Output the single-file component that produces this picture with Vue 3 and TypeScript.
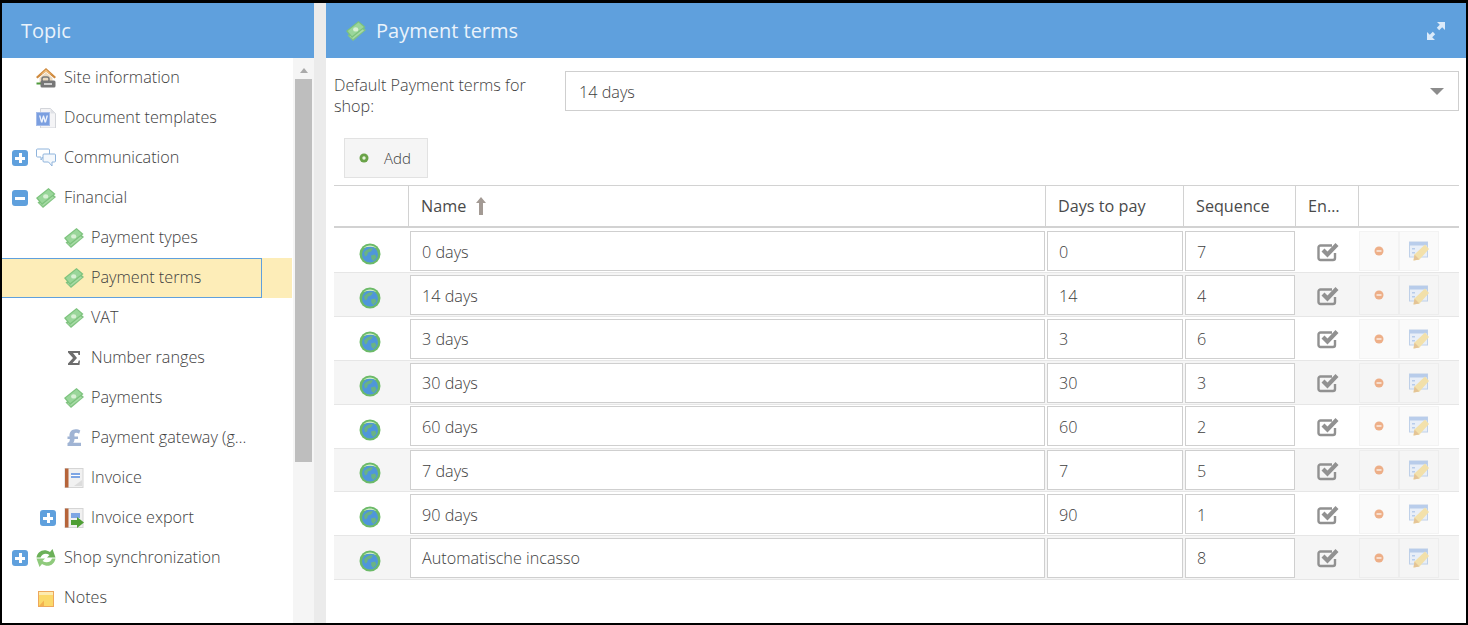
<script setup lang="ts">
interface TreeItem {
  label: string
  icon: string
  level: number
  toggle?: 'plus' | 'minus'
  selected?: boolean
}

interface Term {
  name: string
  days: string
  sequence: string
}

const tree: TreeItem[] = [
  { label: 'Site information', icon: 'house', level: 0 },
  { label: 'Document templates', icon: 'doc', level: 0 },
  { label: 'Communication', icon: 'chat', level: 0, toggle: 'plus' },
  { label: 'Financial', icon: 'money', level: 0, toggle: 'minus' },
  { label: 'Payment types', icon: 'money', level: 1 },
  { label: 'Payment terms', icon: 'money', level: 1, selected: true },
  { label: 'VAT', icon: 'money', level: 1 },
  { label: 'Number ranges', icon: 'sigma', level: 1 },
  { label: 'Payments', icon: 'money', level: 1 },
  { label: 'Payment gateway (g…', icon: 'pound', level: 1 },
  { label: 'Invoice', icon: 'invoice', level: 1 },
  { label: 'Invoice export', icon: 'export', level: 1, toggle: 'plus' },
  { label: 'Shop synchronization', icon: 'sync', level: 0, toggle: 'plus' },
  { label: 'Notes', icon: 'note', level: 0 },
]

const terms: Term[] = [
  { name: '0 days', days: '0', sequence: '7' },
  { name: '14 days', days: '14', sequence: '4' },
  { name: '3 days', days: '3', sequence: '6' },
  { name: '30 days', days: '30', sequence: '3' },
  { name: '60 days', days: '60', sequence: '2' },
  { name: '7 days', days: '7', sequence: '5' },
  { name: '90 days', days: '90', sequence: '1' },
  { name: 'Automatische incasso', days: '', sequence: '8' },
]
</script>

<template>
  <div class="frame">
    <svg class="defs" width="0" height="0">
      <symbol id="money" viewBox="0 0 20 20">
        <path d="M1.500 14.500 15 4.500 20 9 7 20z" fill="#82c482" />
        <path d="M3.500 15.500 15 7l3 2.500L7 18z" fill="#a8dba6" />
        <path d="M0 10 12.500 0 19.500 6 6 17z" fill="#7cc27c" />
        <path d="M1.800 10 12.500 1.600 17.700 6 6 15.300z" fill="#9ad69a" />
        <ellipse cx="9.700" cy="8.400" rx="2.600" ry="2.200" fill="#d8f0d4" />
      </symbol>
      <symbol id="house" viewBox="0 0 20 20">
        <path d="M10 0 0 9l1.500 1.500L10 3.500l8.500 7L20 9z" fill="#cf8a3e" />
        <path d="M10 1.500 4 7l6-3 6 3z" fill="#f0bd7c" />
        <path d="M3.500 10 10 4.500l6.500 5.500v5h-13z" fill="#ead9bf" />
        <rect x="0.500" y="14.500" width="6" height="2" fill="#4f9a3c" />
        <rect x="6" y="9" width="7" height="5" rx="2" fill="none" stroke="#777" stroke-width="1.500" />
        <rect x="4.500" y="12.500" width="15" height="7" rx="1.500" fill="#777" />
        <rect x="8" y="15" width="8" height="2" fill="#d0d0d0" />
      </symbol>
      <symbol id="doc" viewBox="0 0 20 20">
        <path d="M4.500 0.500h10l5 5v14.500h-15z" fill="#f4f4f6" stroke="#d3d5da" />
        <path d="M14.500 0.500v5h5z" fill="#dfe1e6" />
        <rect x="0.500" y="4.500" width="13" height="13" fill="#7b9fe0" stroke="#a6bdea" />
        <path d="M3 7.500h1.500l1 4.500L7 7.500h1l1.500 4.500 1-4.500H12l-2 7H8.500L7.500 10.500l-1 4H5z" fill="#eef3fc" />
      </symbol>
      <symbol id="chat" viewBox="0 0 20 20">
        <path d="M1.500 1h11a1 1 0 0 1 1 1v6a1 1 0 0 1-1 1H7l-2 3V9H1.500a1 1 0 0 1-1-1V2a1 1 0 0 1 1-1z" fill="#fff" stroke="#8fb4dc" />
        <path d="M8 6h10.500a1 1 0 0 1 1 1v6a1 1 0 0 1-1 1H16v4l-3.500-4H8a1 1 0 0 1-1-1V7a1 1 0 0 1 1-1z" fill="#f4f8fc" stroke="#8fb4dc" />
      </symbol>
      <symbol id="sigma" viewBox="0 0 20 20">
        <path d="M4 3h12v4h-1.500l-.5-2H9l4 5-4.500 5H14l.7-2.500H16L15.500 17H4v-1.500L9 10 4 4.500z" fill="#6c6c6c" />
      </symbol>
      <symbol id="pound" viewBox="0 0 20 20">
        <path d="M3.500 18v-3c1.500-.5 2.500-1.800 2.300-4H3.500V8.500h2C5 4 7.800 1.200 11.500 1.200c2 0 3.700.5 4.800 1.300l-1.200 3.300c-1-.7-2-1-3-1-1.300 0-2 1-1.600 3.700H14V11h-3.500c0 1.500-.4 2.800-1.300 3.800h7.800V18z" fill="#a0b4d4" />
      </symbol>
      <symbol id="invoice" viewBox="0 0 20 20">
        <rect x="1" y="0.500" width="18" height="19" fill="#f1f1f1" stroke="#d5d5d5" />
        <rect x="1" y="0.500" width="3.500" height="19" fill="#b5643a" />
        <rect x="7" y="5" width="9" height="5" fill="#7ea6e4" />
        <rect x="7" y="7" width="9" height="1" fill="#fff" />
        <path d="M10 18l8-6v6z" fill="#dcdcdc" />
      </symbol>
      <symbol id="export" viewBox="0 0 20 20">
        <rect x="1" y="0.500" width="18" height="19" fill="#f1f1f1" stroke="#d5d5d5" />
        <rect x="1" y="0.500" width="3.500" height="19" fill="#b5643a" />
        <rect x="7" y="5" width="9" height="5" fill="#7ea6e4" />
        <path d="M7 12h6V9l7 5.500-7 5.500v-3H7z" fill="#4f9f35" />
      </symbol>
      <symbol id="sync" viewBox="0 0 20 20">
        <path d="M0.500 9.500C1.500 3 8 0 14 4l2.500-3 3 8.500h-8.500l2.500-2.500C10 4.500 6 5.500 4.500 9.500z" fill="#6bb058" />
        <path d="M19.500 10.500c-1 6.500-7.500 9.500-13.500 5.500l-2.500 3-3-8.500H9L6.500 13c4 2.500 8 1.500 9.500-2.500z" fill="#8fca7c" />
      </symbol>
      <symbol id="note" viewBox="0 0 20 20">
        <rect x="2.500" y="3.500" width="15" height="15" fill="#fbd96a" stroke="#eda85c" />
        <path d="M3 4h14v3H3z" fill="#fdebb0" />
        <path d="M3 18l5-5.500V18z" fill="#f3b24f" />
      </symbol>
      <symbol id="globe" viewBox="0 0 22 22">
        <circle cx="11" cy="11" r="10.500" fill="#6cba68" />
        <circle cx="11" cy="11.500" r="8" fill="#4f96da" />
        <path d="M5 9.500c2-3 6-5 9-4l-2 3-3 1-1 3-2 1zM12 12.500l4-1 1.500 3-3 3.500-2-2z" fill="#6ab384" />
        <path d="M4.500 5C8 1.500 14 1.500 17.500 5 13 3.200 9 3.200 4.500 5z" fill="#d6f2d0" />
      </symbol>
      <symbol id="edit" viewBox="0 0 20 20">
        <rect x="0.500" y="1" width="18" height="15" fill="#e5edf8" stroke="#b2c8e6" />
        <rect x="0.500" y="1" width="18" height="3.500" fill="#a9c3e8" />
        <rect x="3" y="7" width="3" height="1.500" fill="#a9c3e8" />
        <rect x="3" y="11" width="3" height="1.500" fill="#a9c3e8" />
        <path d="M4.500 19.500l1-6L16 3.500l4 4.500L10.500 18.500z" fill="#f2dc98" />
        <path d="M4.500 19.500l1-6 5 5z" fill="#e0b97e" />
      </symbol>
      <symbol id="check" viewBox="0 0 22 20">
        <path d="M18 11v5a2 2 0 0 1-2 2H3.500a2 2 0 0 1-2-2V5.500a2 2 0 0 1 2-2H15" fill="none" stroke="#919191" stroke-width="2.400" />
        <path d="M4.500 9.500 7.500 6.500 10.500 9.500 18.500 1 21.500 4 10.500 15.500z" fill="#919191" />
      </symbol>
    </svg>

    <aside class="topics">
      <header class="bar">
        <span class="bar-title">Topic</span>
      </header>
      <div class="tree-wrap">
        <ul class="tree">
          <li
            v-for="item in tree"
            :key="item.label"
            class="node"
            :class="[`level-${item.level}`, { selected: item.selected }]"
          >
            <span class="toggle" :class="{ on: item.toggle }">
              <template v-if="item.toggle">
                <i class="dash"></i>
                <i v-if="item.toggle === 'plus'" class="stem"></i>
              </template>
            </span>
            <svg class="node-icon"><use :href="`#${item.icon}`" /></svg>
            <span class="node-label">{{ item.label }}</span>
          </li>
        </ul>
        <div class="scrollbar">
          <span class="scroll-up"></span>
          <div class="thumb"></div>
        </div>
      </div>
    </aside>

    <main class="panel">
      <header class="bar">
        <svg class="bar-icon"><use href="#money" /></svg>
        <span class="bar-title small">Payment terms</span>
        <svg class="expand" viewBox="0 0 20 20">
          <path d="M11 1h8v8l-2.800-2.800-3 3-2.400-2.400 3-3zM9 19H1v-8l2.800 2.800 3-3 2.400 2.400-3 3z" fill="#dcebfa" />
        </svg>
      </header>

      <div class="content">
        <div class="default-row">
          <label class="default-label">Default Payment terms for shop:</label>
          <div class="select">
            <span>14 days</span>
            <i class="caret"></i>
          </div>
        </div>

        <button class="add-btn" type="button">
          <svg viewBox="0 0 10 10"><circle cx="5" cy="5" r="4.500" fill="#6aa348" /><circle cx="5" cy="5" r="1.700" fill="#e6f3dc" /></svg>
          Add
        </button>

        <div class="table">
          <div class="row head">
            <div class="th"></div>
            <div class="th pad">
              Name
              <svg class="sort" viewBox="0 0 10 18"><path d="M5 0 10 6H7v12H3V6H0z" fill="#a39a94" /></svg>
            </div>
            <div class="th pad">Days to pay</div>
            <div class="th pad">Sequence</div>
            <div class="th pad">En…</div>
            <div class="th last"></div>
          </div>
          <div v-for="(term, i) in terms" :key="term.name" class="row body" :class="{ odd: i % 2 === 1 }">
            <div class="td center"><svg class="globe"><use href="#globe" /></svg></div>
            <div class="td"><div class="field">{{ term.name }}</div></div>
            <div class="td"><div class="field">{{ term.days }}</div></div>
            <div class="td"><div class="field">{{ term.sequence }}</div></div>
            <div class="td center"><svg class="check"><use href="#check" /></svg></div>
            <div class="td actions">
              <span class="act">
                <svg class="minus" viewBox="0 0 10 10"><circle cx="5" cy="5" r="4.500" fill="#eda77c" /><rect x="2.500" y="4.200" width="5" height="1.600" fill="#fbe9dc" /></svg>
              </span>
              <span class="act"><svg class="edit"><use href="#edit" /></svg></span>
            </div>
          </div>
        </div>
      </div>
    </main>
  </div>
</template>

<style>
html,
body {
  margin: 0;
  background: #000;
}
</style>

<style scoped>
.frame {
  box-sizing: border-box;
  width: 1468px;
  height: 625px;
  padding: 3px 2px 2px;
  display: flex;
  background: #000;
  font-family: 'Open Sans', sans-serif;
  font-weight: 300;
  color: #3e3e3e;
  overflow: hidden;
}

.defs {
  position: absolute;
}

.topics {
  width: 312px;
  flex: none;
  background: #fff;
  display: flex;
  flex-direction: column;
}

.bar {
  height: 55px;
  flex: none;
  display: flex;
  align-items: center;
  background: #5fa0dd;
  color: #fff;
}

.bar-title {
  margin-left: 19px;
  font-size: 20px;
  font-weight: 400;
  color: #eaf3fb;
}

.bar-title.small {
  margin-left: 10px;
}

.tree-wrap {
  flex: 1;
  display: flex;
  min-height: 0;
}

.tree {
  flex: 1;
  margin: 0;
  padding: 0;
  list-style: none;
}

.node {
  box-sizing: border-box;
  height: 40px;
  margin-right: 1px;
  display: flex;
  align-items: center;
  position: relative;
  font-size: 16.200px;
}

.level-0 {
  padding-left: 10px;
}

.level-1 {
  padding-left: 38px;
}

.selected {
  background: #fdedb8;
}

.selected::after {
  content: '';
  position: absolute;
  left: 0;
  top: 0;
  bottom: 0;
  width: 260px;
  box-sizing: border-box;
  border: 1px solid #5fa0dd;
  border-left: 0;
}

.toggle {
  width: 16px;
  height: 16px;
  flex: none;
  margin-right: 8px;
  position: relative;
  border-radius: 3px;
}

.toggle.on {
  background: #5fa0dd;
}

.dash {
  position: absolute;
  left: 3px;
  right: 3px;
  top: 6.500px;
  height: 3px;
  background: #fff;
}

.stem {
  position: absolute;
  top: 3px;
  bottom: 3px;
  left: 6.500px;
  width: 3px;
  background: #fff;
}

.node-icon {
  width: 20px;
  height: 20px;
  flex: none;
  margin-right: 8px;
}

.level-1 .node-icon {
  margin-right: 7px;
}

.node-label {
  padding-bottom: 2px;
  white-space: nowrap;
}

.scrollbar {
  width: 21px;
  flex: none;
  background: #f5f5f5;
  padding: 0 2px;
  box-sizing: border-box;
  display: flex;
  flex-direction: column;
  align-items: center;
}

.scroll-up {
  margin-top: 10px;
  border: 4.500px solid transparent;
  border-top: 0;
  border-bottom: 5px solid #aaa;
}

.thumb {
  width: 17px;
  height: 383px;
  margin-top: 6px;
  background: #bebebe;
}

.panel {
  flex: 1;
  margin-left: 12px;
  background: #fff;
  display: flex;
  flex-direction: column;
  position: relative;
}

.panel::before {
  content: '';
  position: absolute;
  left: -12px;
  top: 0;
  bottom: 0;
  width: 12px;
  background: #ebebeb;
}

.bar-icon {
  width: 20px;
  height: 20px;
  margin-left: 20px;
}

.expand {
  width: 20px;
  height: 20px;
  margin-left: auto;
  margin-right: 20px;
}

.content {
  padding: 13px 7px 0 8px;
}

.default-row {
  display: flex;
  height: 40px;
}

.default-label {
  box-sizing: border-box;
  width: 231px;
  flex: none;
  padding: 3.500px 30px 0 0;
  font-size: 16.200px;
  line-height: 21px;
}

.select {
  flex: 1;
  box-sizing: border-box;
  height: 40px;
  border: 1px solid #cfcfcf;
  padding: 1px 13px 0;
  font-size: 16.200px;
  display: flex;
  align-items: center;
  justify-content: space-between;
}

.caret {
  margin-right: 1px;
  border: 7px solid transparent;
  border-bottom: 0;
  border-top: 7px solid #8c8c8c;
}

.add-btn {
  display: flex;
  align-items: center;
  box-sizing: border-box;
  width: 84px;
  height: 40px;
  margin: 27px 0 7px 10px;
  padding: 0 0 0 14px;
  background: #f5f5f5;
  border: 1px solid #e2e2e2;
  font: inherit;
  font-size: 15px;
  color: inherit;
}

.add-btn svg {
  width: 10px;
  height: 10px;
  margin-right: 15px;
}

.row {
  display: grid;
  grid-template-columns: 75px 637px 138px 112px 63px 100px;
}

.head {
  box-sizing: border-box;
  height: 43px;
  margin-bottom: 1.700px;
  border-top: 1px solid #d2d2d2;
  border-bottom: 2px solid #d2d2d2;
  font-size: 16.200px;
  font-weight: 400;
}

.th {
  display: flex;
  align-items: center;
  border-right: 1px solid #d2d2d2;
  box-sizing: border-box;
  min-width: 0;
  color: #4a4a4a;
  white-space: nowrap;
}

.th.pad {
  padding-left: 12px;
}

.th.last {
  border-right: 0;
}

.sort {
  width: 10px;
  height: 18px;
  margin-left: 10px;
}

.body {
  box-sizing: border-box;
  height: 43.800px;
  border-bottom: 1px solid #e6e6e6;
  padding-top: 1.600px;
}

.odd {
  background: #f5f5f5;
}

.td {
  min-width: 0;
  padding: 0 1px;
}

.center {
  display: flex;
  align-items: center;
  justify-content: center;
}

.field {
  box-sizing: border-box;
  height: 40px;
  padding: 1px 11px 0;
  display: flex;
  align-items: center;
  background: #fff;
  border: 1px solid #cfcfcf;
  font-size: 16.200px;
}

.globe {
  width: 22px;
  height: 22px;
  margin: 5px 4px 0 0;
}

.check {
  width: 22px;
  height: 20px;
}

.actions {
  display: flex;
  padding: 0;
}

.act {
  box-sizing: border-box;
  width: 40px;
  height: 40px;
  display: flex;
  align-items: center;
  justify-content: center;
  border: 1px solid #f3f3f3;
  background: #fafafa;
}

.odd .act {
  background: #f5f5f5;
  border-color: #ededed;
}

.minus {
  width: 10px;
  height: 10px;
  margin-right: 1px;
  opacity: 0.9;
}

.edit {
  width: 20px;
  height: 20px;
  opacity: 0.8;
}
</style>
